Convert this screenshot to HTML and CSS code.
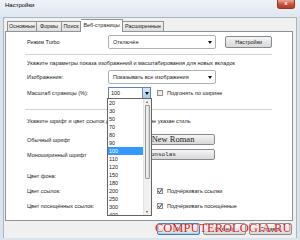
FILE: index.html
```html
<!DOCTYPE html>
<html>
<head>
  <title>Настройки</title>
  <meta charset="UTF-8">
  <link rel="stylesheet" href="styles.css">
</head>
<body>
  <div class="window">
    <div class="titlebar">
      <span class="title">Настройки</span>
      <span class="close">x</span>
    </div>
    <div class="client">
      <div class="tabs">
        <span class="tab t1">Основные</span>
        <span class="tab t2">Формы</span>
        <span class="tab t3">Поиск</span>
        <span class="tab active t4">Веб-страницы</span>
        <span class="tab t5">Расширенные</span>
      </div>
      <div class="panel">
        <div class="row turbo">
          <span class="lbl">Режим Turbo</span>
          <span class="select sel-turbo">Отключён<i class="arrow"></i></span>
          <span class="btn btn-settings">Настройки</span>
        </div>
        <div class="sep"></div>
        <div class="note">Укажите параметры показа изображений и масштабирования для новых вкладок</div>
        <div class="row images">
          <span class="lbl">Изображения:</span>
          <span class="select sel-images">Показывать все изображения<i class="arrow"></i></span>
        </div>
        <div class="row scale">
          <span class="lbl">Масштаб страницы (%):</span>
          <span class="combo">
            <span class="combo-text">100</span>
            <span class="combo-btn"><i class="arrow"></i></span>
            <span class="droplist">
              <span class="items">
                <span>20</span>
                <span>30</span>
                <span>50</span>
                <span>70</span>
                <span>80</span>
                <span>90</span>
                <span class="hl">100</span>
                <span>110</span>
                <span>120</span>
                <span>150</span>
                <span>180</span>
                <span>200</span>
                <span>250</span>
                <span>300</span>
                <span>400</span>
              </span>
              <span class="scrollbar">
                <span class="sb-up"></span>
                <span class="sb-thumb"></span>
                <span class="sb-down"></span>
              </span>
            </span>
          </span>
          <span class="check"></span>
          <span class="chk-label">Подгонять по ширине</span>
        </div>
        <div class="sep sep2"></div>
        <div class="note note2">Укажите шрифт и цвет ссылок для страниц, где не указан стиль</div>
        <div class="row font1">
          <span class="lbl">Обычный шрифт</span>
          <span class="btn font-btn serif">Times New Roman</span>
        </div>
        <div class="row font2">
          <span class="lbl">Моноширинный шрифт</span>
          <span class="btn font-btn mono">Consolas</span>
        </div>
        <div class="row color1">
          <span class="lbl">Цвет фона:</span>
          <span class="swatch"></span>
        </div>
        <div class="row color2">
          <span class="lbl">Цвет ссылок:</span>
          <span class="swatch"></span>
          <span class="check checked"><svg viewBox="0 0 6 6" width="6" height="6"><path d="M1.2 3.2 L2.5 4.6 L4.8 1.2" fill="none" stroke="#1f3f7a" stroke-width="1"/></svg></span>
          <span class="chk-label">Подчёркивать ссылки</span>
        </div>
        <div class="row color3">
          <span class="lbl">Цвет посещённых ссылок:</span>
          <span class="swatch"></span>
          <span class="check checked"><svg viewBox="0 0 6 6" width="6" height="6"><path d="M1.2 3.2 L2.5 4.6 L4.8 1.2" fill="none" stroke="#1f3f7a" stroke-width="1"/></svg></span>
          <span class="chk-label">Подчёркивать посещённые</span>
        </div>
      </div>
      <div class="buttons">
        <span class="btn dlg default">OK</span>
        <span class="btn dlg">Отмена</span>
        <span class="btn dlg">Справка</span>
      </div>
    </div>
    <div class="watermark">COMPUTEROLOGIA.RU</div>
  </div>
</body>
</html>
```

FILE: styles.css
```css
body {
  margin: 0;
  font-family: "Liberation Sans", Arial, sans-serif;
  font-size: 5.5px;
  color: #1b1b1b;
}

.window {
  position: relative;
  width: 300px;
  height: 240px;
  box-sizing: border-box;
  background: #dbe4ed;
  overflow: hidden;
}

.titlebar {
  display: flex;
  height: 17px;
  padding-left: 5px;
  background: linear-gradient(#eef3f8, #dfe7ef);
}

.title {
  margin-top: 2px;
  font-size: 6px;
  color: #000;
}

.close {
  margin-left: auto;
  margin-right: 5px;
  width: 18px;
  height: 9px;
  box-sizing: border-box;
  border: 1px solid #8c3a2c;
  border-top: none;
  border-radius: 0 0 3px 3px;
  background: linear-gradient(#e9a796, #c9503a 55%, #b83a26);
  color: #fff;
  font-size: 6px;
  font-weight: bold;
  line-height: 7px;
  text-align: center;
}

.client {
  margin: 0 3px;
  height: 221px;
  box-sizing: border-box;
  border: 1px solid #aab5c1;
  border-bottom: none;
  background: #f0f0f0;
  padding: 0 3px 0 1px;
}

.tabs {
  display: flex;
  align-items: flex-end;
  height: 13px;
  margin-left: 2px;
}

.tab {
  height: 10px;
  box-sizing: border-box;
  border: 1px solid #8e939a;
  border-bottom: none;
  border-left: none;
  background: linear-gradient(#f4f4f4, #dedede);
  line-height: 9px;
  text-align: center;
  white-space: nowrap;
}

.t1 { width: 30px; border-left: 1px solid #8e939a; }
.t2 { width: 25px; }
.t3 { width: 19px; }
.t4 { width: 42px; }
.t5 { width: 41px; }

.tab.active {
  height: 13px;
  margin-bottom: -1px;
  background: #fff;
  line-height: 11px;
  position: relative;
  z-index: 1;
}

.panel {
  position: relative;
  height: 190px;
  box-sizing: border-box;
  border: 1px solid #8e939a;
  background: #fff;
  padding: 3px 20px 0 21px;
}

.row {
  display: flex;
  align-items: center;
}

.lbl {
  width: 81px;
  flex: none;
}

.select {
  position: relative;
  height: 14px;
  box-sizing: border-box;
  border: 1px solid #a9b0b8;
  border-radius: 2px;
  background: #fff;
  line-height: 12px;
  padding-left: 4px;
}

.select .arrow {
  position: absolute;
  right: 3px;
  top: 5px;
}

.arrow {
  display: block;
  width: 0;
  height: 0;
  border-left: 2px solid transparent;
  border-right: 2px solid transparent;
  border-top: 3px solid #111;
}

.sel-turbo { width: 109px; }
.sel-images { width: 108px; }

.btn {
  box-sizing: border-box;
  border: 1px solid #868a8f;
  border-radius: 2px;
  background: linear-gradient(#f6f6f6, #e6e6e6 50%, #d9d9d9);
  text-align: center;
  white-space: nowrap;
}

.btn-settings {
  margin-left: 9px;
  width: 47px;
  height: 12px;
  line-height: 10px;
}

.sep {
  margin-top: 5px;
  margin-left: -2px;
  height: 1px;
  background: #d2d2d2;
}

.note {
  margin-top: 3px;
  height: 10px;
  line-height: 10px;
  white-space: nowrap;
}

.images { margin-top: 2px; height: 14px; }

.scale { margin-top: 3px; height: 12px; }

.combo {
  position: relative;
  display: flex;
  width: 43px;
  height: 12px;
  box-sizing: border-box;
  border: 1px solid #5b84b9;
  background: #fff;
}

.combo-text {
  flex: 1;
  line-height: 10px;
  padding-left: 2px;
}

.combo-btn {
  width: 7px;
  border-left: 1px solid #6d8fb8;
  background: linear-gradient(#d7e8f8, #a9cbec);
  display: flex;
  align-items: center;
  justify-content: center;
}

.droplist {
  position: absolute;
  top: 10px;
  left: -2px;
  width: 45px;
  height: 118px;
  box-sizing: border-box;
  border: 1px solid #646464;
  background: #fff;
  display: flex;
  z-index: 5;
  overflow: hidden;
}

.items {
  flex: 1;
  display: flex;
  flex-direction: column;
}

.items span {
  flex: none;
  height: 8px;
  line-height: 8px;
  padding-left: 1px;
}

.items .hl {
  background: #3399ff;
  color: #fff;
}

.scrollbar {
  width: 7px;
  display: flex;
  flex-direction: column;
  background: #f0f0f0;
  border-left: 1px solid #e4e4e4;
}

.sb-up, .sb-down {
  height: 6px;
  position: relative;
}

.sb-up::after, .sb-down::after {
  content: "";
  position: absolute;
  left: 2px;
  top: 2px;
  border-left: 1.5px solid transparent;
  border-right: 1.5px solid transparent;
}

.sb-up::after { border-bottom: 2px solid #555; }
.sb-down::after { border-top: 2px solid #555; }

.sb-thumb {
  height: 72px;
  margin: 0 1px;
  border: 1px solid #9a9a9a;
  border-radius: 1px;
  background: linear-gradient(90deg, #f2f2f2, #dcdcdc);
}

.sb-down { margin-top: auto; }

.check {
  width: 6px;
  height: 6px;
  box-sizing: border-box;
  border: 1px solid #8f8f8f;
  background: linear-gradient(135deg, #dedede, #f8f8f8);
  margin-left: 6px;
  display: flex;
}

.check svg {
  margin: -1px;
}

.sep2 { margin-top: 10px; }

.note2 { margin-top: 6px; }

.font1 { margin-top: 8px; height: 11px; }
.font2 { margin-top: 4px; height: 11px; }

.font-btn {
  width: 107px;
  height: 11px;
  line-height: 9px;
}

.serif {
  font-family: "Liberation Serif", "Times New Roman", serif;
  font-size: 8.5px;
}

.mono {
  font-family: "Liberation Mono", "Courier New", monospace;
  font-size: 6px;
}

.color1 { margin-top: 11px; height: 10px; }
.color2, .color3 { margin-top: 5px; height: 10px; }

.swatch {
  width: 30px;
  height: 9px;
  box-sizing: border-box;
  border: 1px solid #888;
  background: #fff;
}

.color2 .check, .color3 .check {
  margin-left: 19px;
}

.chk-label {
  margin-left: 4px;
}

.buttons {
  display: flex;
  justify-content: flex-end;
  gap: 3px;
  margin-top: 2px;
  padding-right: 1px;
}

.dlg {
  width: 43px;
  height: 12px;
  line-height: 10px;
}

.dlg.default {
  border-color: #3c7fb1;
  box-shadow: inset 0 0 0 1px #9fd7f5;
}

.watermark {
  position: absolute;
  left: 155px;
  top: 222px;
  font-family: "Liberation Serif", "Times New Roman", serif;
  font-size: 12.5px;
  line-height: 13px;
  color: #cf1a1a;
  text-shadow: 0 0 1px #fff, 0 0 1px #fff;
}
```
